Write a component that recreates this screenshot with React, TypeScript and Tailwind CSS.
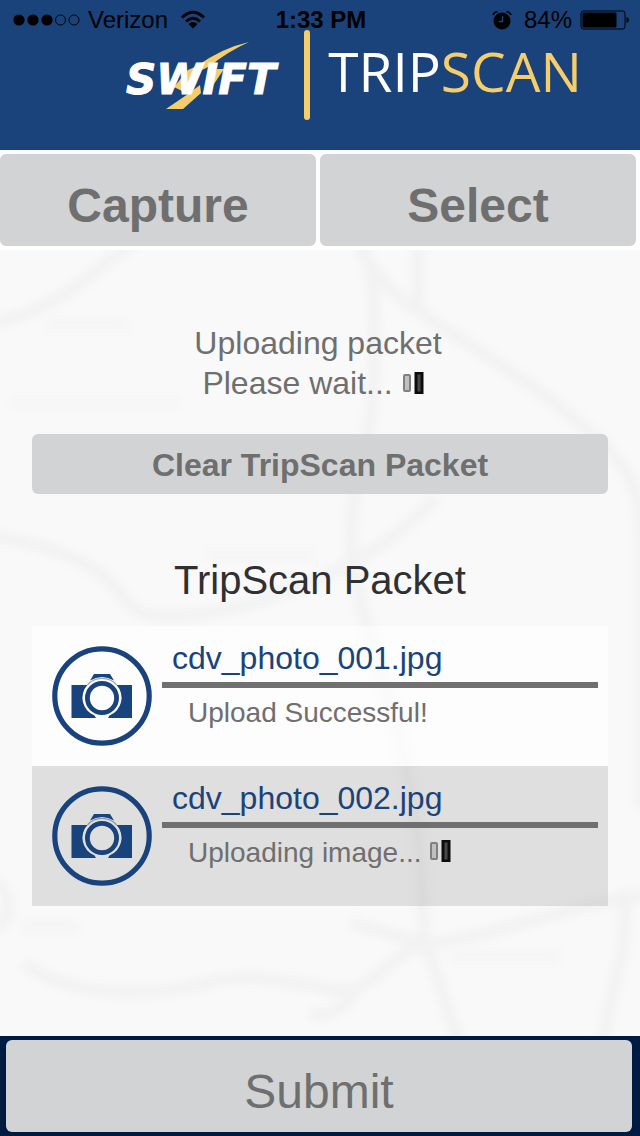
import React from 'react';

interface Photo {
  name: string;
  status: string;
  uploading: boolean;
}

const photos: Photo[] = [
  { name: 'cdv_photo_001.jpg', status: 'Upload Successful!', uploading: false },
  { name: 'cdv_photo_002.jpg', status: 'Uploading image...', uploading: true },
];

const Spinner: React.FC = () => (
  <svg className="inline-block align-baseline" width="32" height="22" viewBox="0 0 32 22" aria-hidden="true">
    <rect x="2" y="3" width="6" height="16" rx="1" fill="#c0c0c0" stroke="#808080" strokeWidth="2" />
    <rect x="14" y="1" width="6" height="20" fill="#484848" stroke="#0c0c0c" strokeWidth="3" />
  </svg>
);

const CameraIcon: React.FC = () => (
  <svg className="flex-none" width="100" height="100" viewBox="0 0 100 100" aria-hidden="true">
    <circle cx="50" cy="50" r="47.200" fill="none" stroke="#19437c" strokeWidth="5.200" />
    <g fill="#19437c">
      <path d="M19.500 39H35.400A19 19 0 0 0 42.500 69.500L44 72H19.500Z" />
      <path d="M80 39H64.600A19 19 0 0 1 57.500 69.500L56 72H80Z" />
      <path d="M42 28H58L62 34.500Q50 27.500 38 34.500Z" />
    </g>
    <path d="M35.400 39A19.500 19.500 0 0 1 64.600 39" fill="none" stroke="#19437c" strokeOpacity="0.450" strokeWidth="1.200" />
    <circle cx="50" cy="52" r="14.600" fill="none" stroke="#19437c" strokeWidth="4.800" />
  </svg>
);

const StatusBar: React.FC = () => (
  <div className="grid grid-cols-[1fr_auto_1fr] items-center pt-[10px] pl-3 pr-2.5 text-[24px] leading-[20px] text-black">
    <div className="flex items-center gap-2">
      <svg width="68" height="14" viewBox="0 0 68 14" aria-hidden="true">
        <circle cx="7" cy="7" r="5.6" />
        <circle cx="21" cy="7" r="5.6" />
        <circle cx="35" cy="7" r="5.6" />
        <circle cx="48.500" cy="7" r="5" fill="none" stroke="black" />
        <circle cx="62" cy="7" r="5" fill="none" stroke="black" />
      </svg>
      <span>Verizon</span>
      <svg className="ml-1" width="26" height="20" viewBox="0 0 26 20" aria-hidden="true">
        <path d="M2 7.500Q13 -3 24 7.500M6 11.500Q13 5 20 11.500" fill="none" stroke="black" strokeWidth="3" />
        <path d="M8.500 14Q13 10 17.500 14L13 18.500Z" />
      </svg>
    </div>
    <span className="font-bold">1:33 PM</span>
    <div className="flex items-center justify-end gap-2">
      <svg width="20" height="20" viewBox="0 0 20 20" aria-hidden="true">
        <circle cx="10" cy="11" r="8.500" />
        <path d="M1 5Q2 2 5.500 1.500M19 5Q18 2 14.500 1.500" fill="none" stroke="black" strokeWidth="1.600" />
        <path d="M10.500 6V11.500H6.500" fill="none" stroke="#19437a" strokeWidth="1.500" />
      </svg>
      <span className="ml-1">84%</span>
      <svg width="50" height="20" viewBox="0 0 50 20" aria-hidden="true">
        <rect x="1" y="1" width="44" height="18" rx="2.500" fill="none" stroke="black" />
        <rect x="2.500" y="2.500" width="34" height="15" rx="1" />
        <path d="M46.500 7Q49 7.500 49 10T46.500 13Z" />
      </svg>
    </div>
  </div>
);

const SwiftLogo: React.FC = () => (
  <svg className="flex-none" width="162" height="70" viewBox="0 0 162 70" role="img" aria-label="Swift">
    {/* road running behind the lettering */}
    <g fill="#f6cd6b">
      <path d="M123 1Q96 7 71 25H84Q101 11 123 1Z" />
      <path d="M71 25L62 29L48 46L56 50L76 29L84 25Z" />
      <path d="M91 28H98L88 43L80 44Z" />
      <path d="M40 68L62 53L74 44L75 52L57 68Z" />
    </g>
    <text
      x="0"
      y="53"
      className="text-[42px] font-bold italic"
      fontFamily="'DejaVu Sans', sans-serif"
      fill="white"
      stroke="white"
      strokeWidth="1"
    >
      SWIFT
    </text>
  </svg>
);

// Faint blurred road map behind the packet list
const MapBackground: React.FC = () => (
  <svg
    className="absolute inset-0 w-full h-full"
    viewBox="0 0 640 786"
    preserveAspectRatio="xMidYMid slice"
    aria-hidden="true"
  >
    <defs>
      <filter id="soften">
        <feGaussianBlur stdDeviation="5" />
      </filter>
    </defs>
    <g fill="none" stroke="#f2f2f2" strokeWidth="12" filter="url(#soften)">
      <path d="M-10 74C50 62 80 34 135 -10" />
      <path d="M362 -10C376 20 376 90 372 157C366 210 346 250 352 310C362 390 424 500 424 693" />
      <path d="M418 -10V60M359 0C380 30 400 50 412 57C460 90 530 130 584 177S640 240 642 300V560" />
      <path d="M-10 286C40 292 90 310 112 334S130 363 160 366C210 370 350 340 437 247" />
      <path d="M24 713C60 745 150 750 220 730C280 722 330 745 351 740C380 730 400 700 424 693C490 690 560 655 650 645" />
      <path d="M351 673L424 693C436 715 440 740 460 795M624 640C630 700 610 740 602 795" />
      <path d="M-5 630C15 650 10 670 -5 680M310 765Q350 765 355 735" />
    </g>
    <g fill="#f5f5f5" filter="url(#soften)">
      <rect x="45" y="68" width="85" height="14" />
      <rect x="10" y="146" width="170" height="12" />
      <rect x="205" y="298" width="110" height="14" />
      <rect x="450" y="700" width="110" height="14" />
      <rect x="20" y="670" width="60" height="14" />
    </g>
  </svg>
);

const PhotoRow: React.FC<{ photo: Photo }> = ({ photo }) => (
  <li className="flex gap-2.5 h-[140px] pl-5 pr-2.5 odd:bg-white/60 even:bg-black/10">
    <div className="pt-5">
      <CameraIcon />
    </div>
    <div className="flex-1 pt-3">
      <a href="#photo" className="block pl-2.5 text-[32px] leading-[40px] text-[#19437a]">
        {photo.name}
      </a>
      <div className="mt-1 h-1.5 bg-[#6f706f]"></div>
      <p className="mt-2 pl-[26px] text-[28px] leading-[34px]">
        {photo.status} {photo.uploading && <Spinner />}
      </p>
    </div>
  </li>
);

const App: React.FC = () => {
  return (
    <div className="min-h-screen flex flex-col bg-white text-[#6f6f6f] font-['Liberation_Sans',Arial,sans-serif]">
      <header className="bg-[#19437a] pb-[30px]">
        <StatusBar />
        <div className="flex justify-center pl-[68px]">
          <div className="pt-[11px]">
            <SwiftLogo />
          </div>
          <div className="ml-4 w-1.5 h-[90px] rounded-sm bg-[#f6cd6b]"></div>
          <h1 className="ml-[18px] pt-[11px] text-[55px] leading-[60px] font-medium text-white font-['Open_Sans',sans-serif]">
            TRIP<span className="text-[#f6cd6b]">SCAN</span>
          </h1>
        </div>
      </header>

      <nav className="grid grid-cols-2 gap-1 py-1 pr-1 text-[48px]">
        <button type="button" className="h-[92px] pt-3 rounded-md bg-[#d2d3d5] font-bold">
          Capture
        </button>
        <button type="button" className="h-[92px] pt-3 rounded-md bg-[#d2d3d5] font-bold">
          Select
        </button>
      </nav>

      <main className="relative flex-1 bg-[#f9f9f9]">
        <MapBackground />
        <div className="relative px-8 pt-[73px]">
          <p className="pr-1 text-center text-[32px] leading-[40px]">
            Uploading packet
            <br />
            Please wait... <Spinner />
          </p>
          <button type="button" className="mt-[31px] w-full h-[60px] pt-0.5 rounded-md bg-[#d2d3d5] text-[32px] font-bold">
            Clear TripScan Packet
          </button>
          <h2 className="mt-[62px] mb-[22px] text-center text-[40px] leading-[48px] text-[#303030]">
            TripScan Packet
          </h2>
          <ul>
            {photos.map((photo) => (
              <PhotoRow key={photo.name} photo={photo} />
            ))}
          </ul>
        </div>
      </main>

      <footer className="py-1 pl-1.5 pr-2 bg-[#001b42]">
        <button type="button" className="block w-full h-[92px] pt-3 rounded-md bg-[#d2d3d5] text-[48px]">
          Submit
        </button>
      </footer>
    </div>
  );
};

export default App;
